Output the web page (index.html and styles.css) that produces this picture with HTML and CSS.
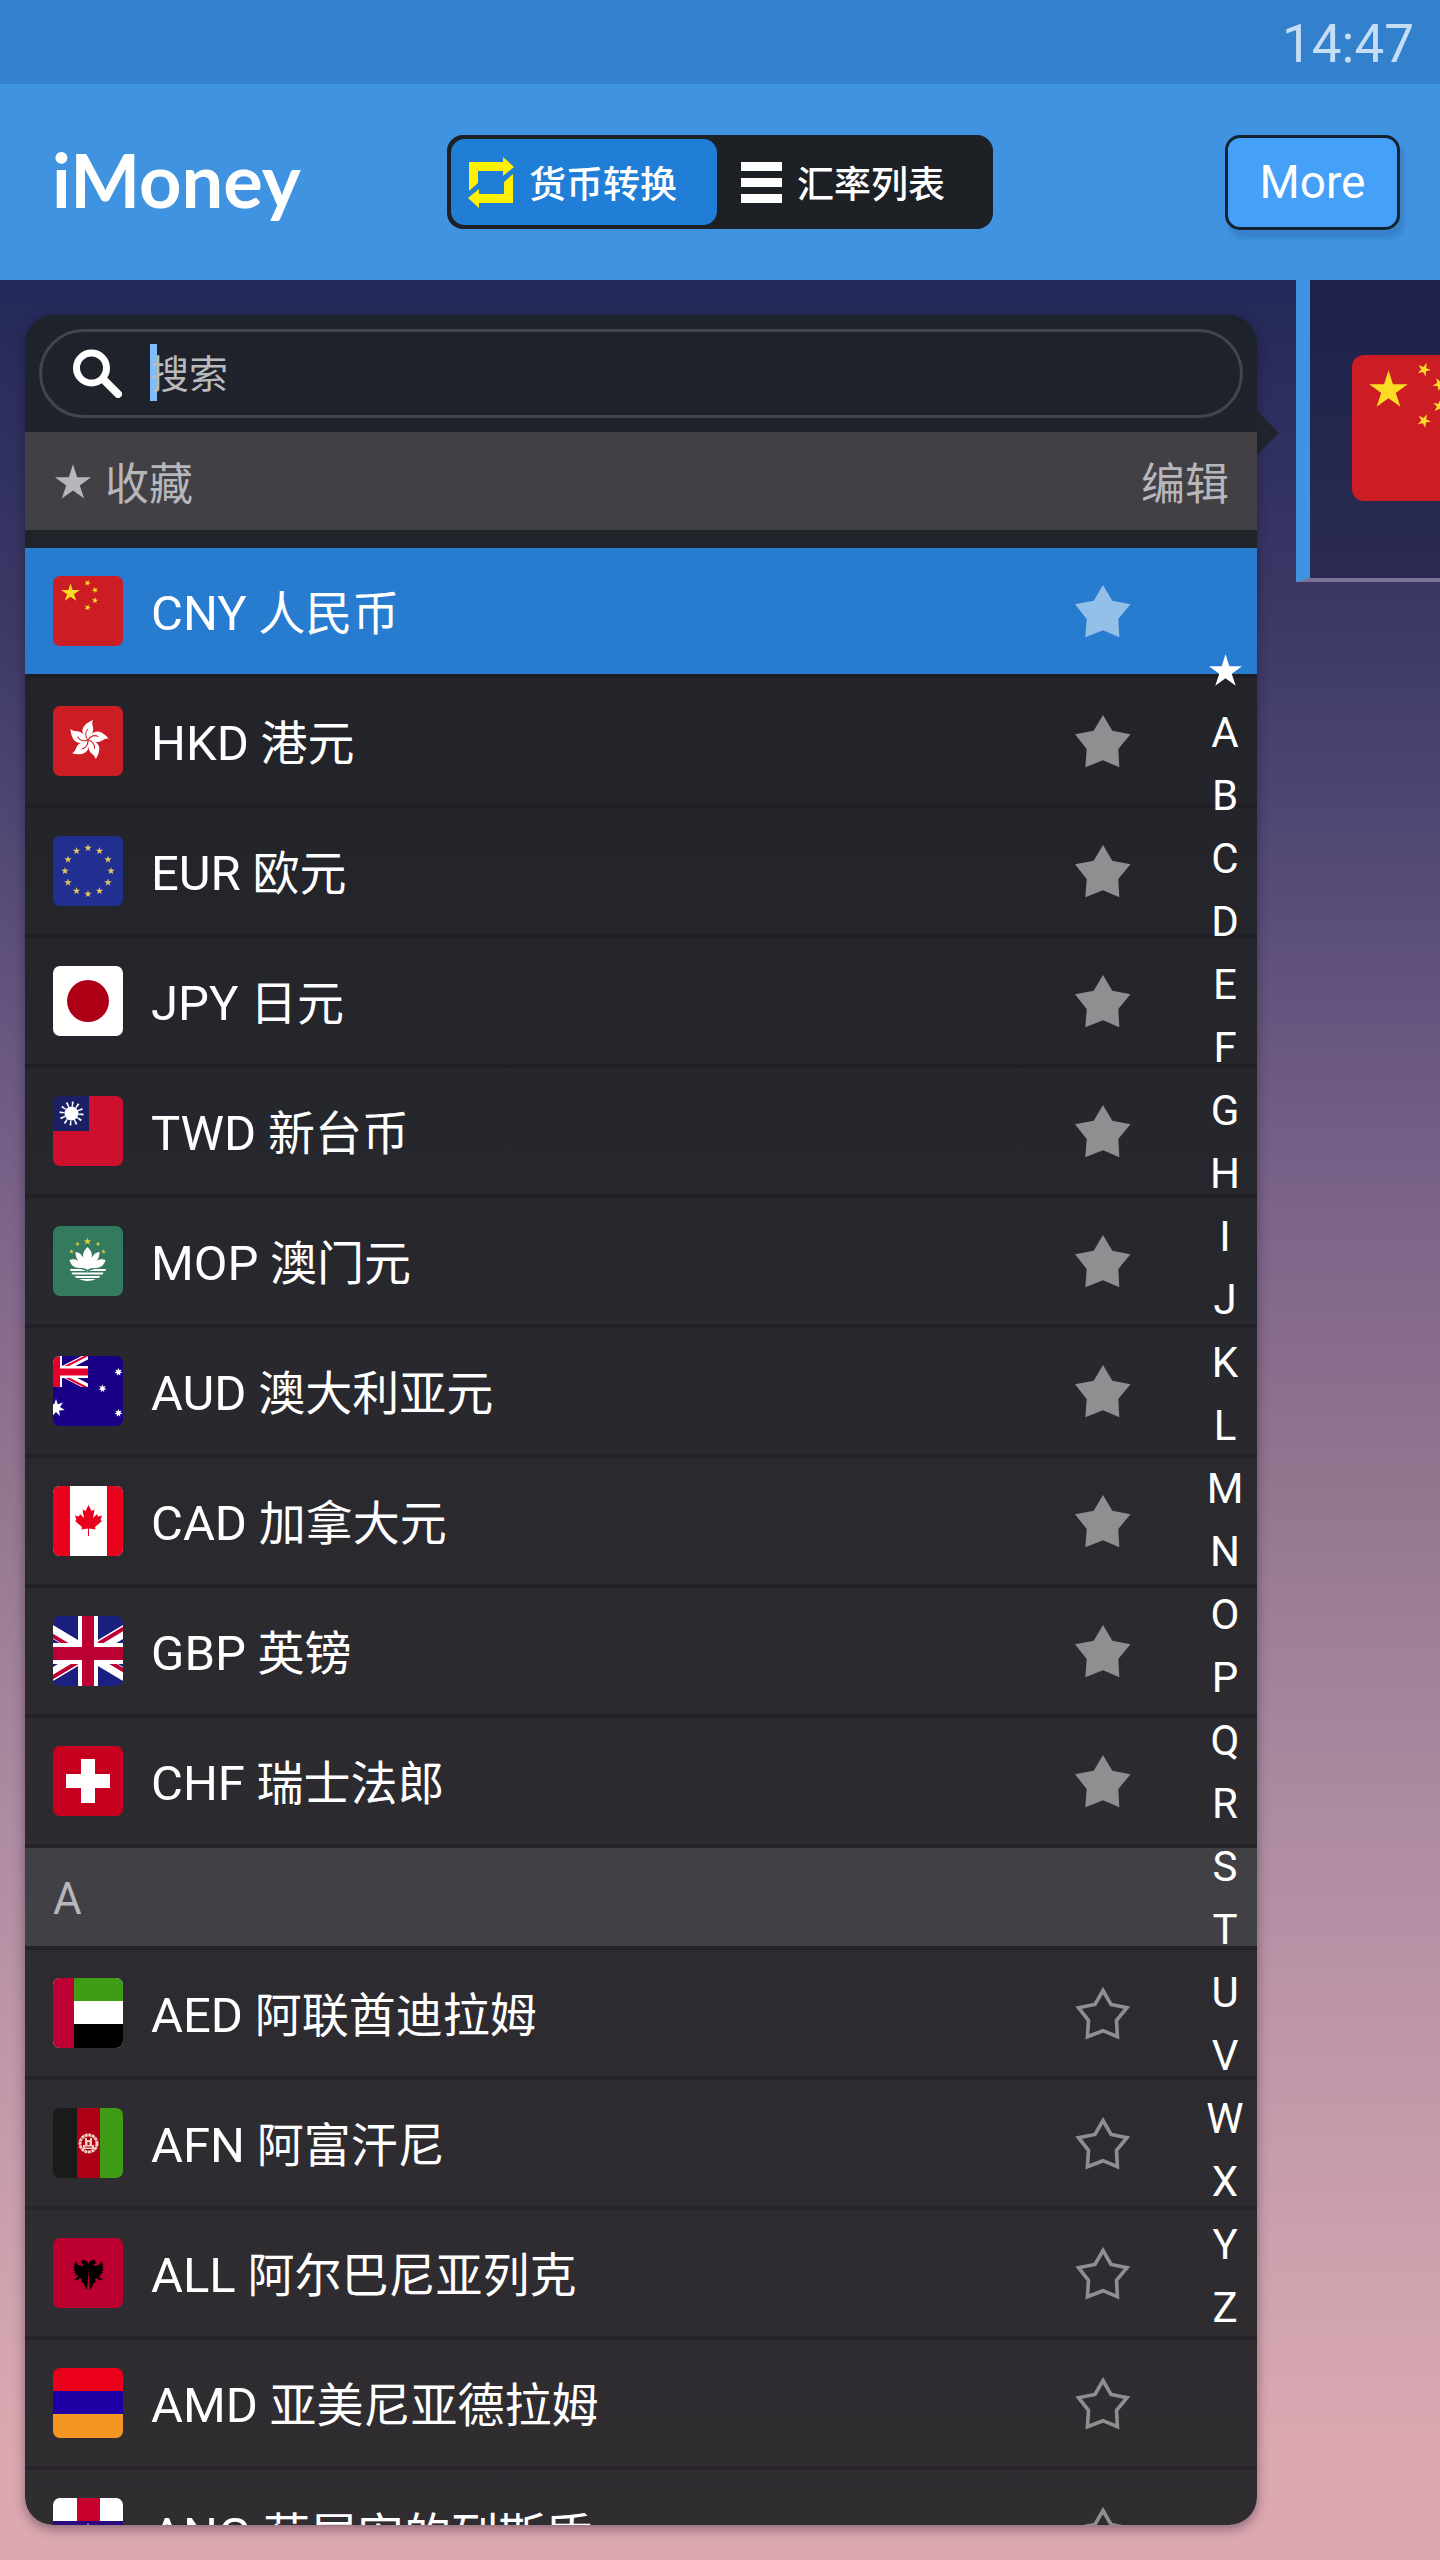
FILE: index.html
```html
<!DOCTYPE html>
<html lang="zh-CN">
<head>
    <meta charset="UTF-8">
    <meta name="viewport" content="width=device-width, initial-scale=1.0">
    <title>iMoney</title>
    <link rel="stylesheet" href="styles.css">
</head>
<body>
    <!-- shared shapes and flags -->
    <svg class="defs" width="0" height="0" aria-hidden="true">
        <defs>
            <path id="s5" d="M0-10 2.2-3.1 9.5-3.1 3.6 1.2 5.9 8.1 0 3.8-5.9 8.1-3.6 1.2-9.5-3.1-2.2-3.1z"/>
            <path id="s7" d="M0-10 2-4.1 7.8-6.2 4.4-1 9.7 2.2 3.5 2.8 4.3 9 0 4.5-4.3 9-3.5 2.8-9.7 2.2-4.4-1-7.8-6.2-2-4.1z"/>
            <path id="petal" d="M0 0C-5-3-8-10-3-15-1-17 2-19 5-20 3-16 6-13 5-9 4-5 1-4 0 0z"/>
            <symbol id="star-full" viewBox="0 0 56 53">
                <path d="M28 0 37.3 15.7 55.5 19.3 43.3 34 44.3 52.3 28 45.3 10.3 52.3 11.7 34 0 19.3 18.7 15.7z"/>
            </symbol>
            <symbol id="star-line" viewBox="0 0 56 53">
                <path fill="none" stroke="currentColor" stroke-width="3.600" d="M28 3.500 36 17.500 52 20.700 41.500 33.300 42.400 49.700 28 43.700 12.400 49.700 13.500 33.300 3.500 20.700 20 17.500z"/>
            </symbol>
            <symbol id="cny" viewBox="0 0 70 70">
                <path fill="#cb1d23" d="M0 0h70v70H0z"/>
                <g fill="#fbdc25">
                    <use href="#s5" transform="translate(17.5 17) scale(.97)"/>
                    <use href="#s5" transform="translate(34.5 7) rotate(22) scale(.34)"/>
                    <use href="#s5" transform="translate(42 14) rotate(44) scale(.34)"/>
                    <use href="#s5" transform="translate(42 24.5) rotate(8) scale(.34)"/>
                    <use href="#s5" transform="translate(34.5 31.5) rotate(25) scale(.34)"/>
                </g>
            </symbol>
            <symbol id="hkd" viewBox="0 0 70 70">
                <path fill="#cb1d23" d="M0 0h70v70H0z"/>
                <g transform="translate(35 34)">
                    <g fill="#fff">
                        <use href="#petal"/>
                        <use href="#petal" transform="rotate(72)"/>
                        <use href="#petal" transform="rotate(144)"/>
                        <use href="#petal" transform="rotate(216)"/>
                        <use href="#petal" transform="rotate(288)"/>
                    </g>
                    <g fill="none" stroke="#cb1d23" stroke-width="1">
                        <path id="vn" d="M0 0C-3-4-3-8 0-11"/>
                        <use href="#vn" transform="rotate(72)"/>
                        <use href="#vn" transform="rotate(144)"/>
                        <use href="#vn" transform="rotate(216)"/>
                        <use href="#vn" transform="rotate(288)"/>
                    </g>
                </g>
            </symbol>
            <symbol id="eur" viewBox="0 0 70 70">
                <path fill="#202f90" d="M0 0h70v70H0z"/>
                <g fill="#e3c466">
                    <use href="#s5" transform="translate(35 12) scale(.4)"/>
                    <use href="#s5" transform="translate(46.5 15) scale(.4)"/>
                    <use href="#s5" transform="translate(55 23.5) scale(.4)"/>
                    <use href="#s5" transform="translate(58 35) scale(.4)"/>
                    <use href="#s5" transform="translate(55 46.5) scale(.4)"/>
                    <use href="#s5" transform="translate(46.5 55) scale(.4)"/>
                    <use href="#s5" transform="translate(35 58) scale(.4)"/>
                    <use href="#s5" transform="translate(23.5 55) scale(.4)"/>
                    <use href="#s5" transform="translate(15 46.5) scale(.4)"/>
                    <use href="#s5" transform="translate(12 35) scale(.4)"/>
                    <use href="#s5" transform="translate(15 23.5) scale(.4)"/>
                    <use href="#s5" transform="translate(23.5 15) scale(.4)"/>
                </g>
            </symbol>
            <symbol id="jpy" viewBox="0 0 70 70">
                <path fill="#fff" d="M0 0h70v70H0z"/>
                <circle cx="35" cy="35" r="21" fill="#ad0017"/>
            </symbol>
            <symbol id="twd" viewBox="0 0 70 70">
                <path fill="#cf0f2e" d="M0 0h70v70H0z"/>
                <path fill="#1b2065" d="M0 0h36v35H0z"/>
                <circle cx="18.500" cy="17.500" r="9.500" fill="none" stroke="#fff" stroke-width="5" stroke-dasharray="1.6 3.374"/>
                <circle cx="18.500" cy="17.500" r="7" fill="#fff"/>
            </symbol>
            <symbol id="mop" viewBox="0 0 70 70">
                <path fill="#347a5e" d="M0 0h70v70H0z"/>
                <g fill="#e0cf3d">
                    <use href="#s5" transform="translate(34.5 15.500) scale(.4)"/>
                    <use href="#s5" transform="translate(24.500 18) scale(.25)"/>
                    <use href="#s5" transform="translate(45 18) scale(.25)"/>
                    <use href="#s5" transform="translate(18.500 25.500) scale(.25)"/>
                    <use href="#s5" transform="translate(50.500 25.500) scale(.25)"/>
                </g>
                <g fill="#fff">
                    <path d="M34.500 21c4 4 5 7 4 11 2-4 5-6 8-6 0 4-1 7-3 9 3-2 6-2 9-1-1 5-5 8-10 8-3 0-5 0-8 2-3-2-5-2-8-2-5 0-9-3-10-8 3-1 6-1 9 1-2-2-3-5-3-9 3 0 6 2 8 6-1-4 0-7 4-11z"/>
                    <path d="M17 43h11l6.500 2.500L41 43h12l-.5 2h-35zM18.500 46.500h32l-1 2h-30zM21.500 50h26l-2 2h-22zM26 53h17q-8.500 4-17 0z"/>
                </g>
            </symbol>
            <symbol id="aud" viewBox="0 0 70 70">
                <path fill="#1a0087" d="M0 0h70v70H0z"/>
                <path stroke="#fff" stroke-width="6" d="M6 15 37-1M6 16 37 32"/>
                <path stroke="#e4002b" stroke-width="2" d="M6 14 37-2M8 18.500 37 33.500"/>
                <path fill="#1a0087" d="M35 0h5v40h-5zM0 31h40v5H0z"/>
                <path fill="#fff" d="M0 0h9v31H0zM0 10h35v12H0z"/>
                <path fill="#e4002b" d="M0 0h7v31H0zM0 12.500h35v7H0z"/>
                <g fill="#fff">
                    <use href="#s7" transform="translate(3 52) scale(.9)"/>
                    <use href="#s7" transform="translate(49.500 32.500) scale(.42)"/>
                    <use href="#s7" transform="translate(65.500 16) scale(.42)"/>
                    <use href="#s7" transform="translate(65.500 57) scale(.42)"/>
                </g>
            </symbol>
            <symbol id="cad" viewBox="0 0 70 70">
                <path fill="#fff" d="M0 0h70v70H0z"/>
                <path fill="#e8001c" d="M0 0h17v70H0zM54 0h16v70H54z"/>
                <path fill="#e8001c" d="M35.500 19 38.500 25l3-1.500L40 32l4-4 1 2.500 4-1-1.500 4.500 1.500 1-7 6 .5 2.500-6.500-1V50h-1v-7.500l-6.500 1L29 41l-7-6 1.500-1L22 29.500l4 1L27 28l4 4-1.500-8.500 3 1.500z"/>
            </symbol>
            <symbol id="gbp" viewBox="0 0 70 70">
                <path fill="#1b2080" d="M0 0h70v70H0z"/>
                <path stroke="#fff" stroke-width="12" d="M-5 13 75 61M75 13-5 61"/>
                <path stroke="#bd0034" stroke-width="4" d="M-5 17 35 41M75 57 35 33M75 10 35 34M-5 64 35 40"/>
                <path fill="#fff" d="M25 0h20v70H25zM0 27h70v21H0z"/>
                <path fill="#bd0034" d="M29 0h12v70H29zM0 31h70v13H0z"/>
            </symbol>
            <symbol id="chf" viewBox="0 0 70 70">
                <path fill="#c8001f" d="M0 0h70v70H0z"/>
                <path fill="#fff" d="M28 13h14v15h15v14H42v15H28V42H13V28h15z"/>
            </symbol>
            <symbol id="aed" viewBox="0 0 70 70">
                <path fill="#fff" d="M0 0h70v70H0z"/>
                <path fill="#3f9c15" d="M20 0h50v23H20z"/>
                <path d="M20 46h50v24H20z"/>
                <path fill="#bd0034" d="M0 0h21v70H0z"/>
            </symbol>
            <symbol id="afn" viewBox="0 0 70 70">
                <path fill="#1a1a1a" d="M0 0h24v70H0z"/>
                <path fill="#ad0017" d="M24 0h23v70H24z"/>
                <path fill="#3f9c15" d="M47 0h23v70H47z"/>
                <circle cx="35.500" cy="35.500" r="8.500" fill="none" stroke="#f3cfc2" stroke-width="3" stroke-dasharray="3 .6"/>
                <path fill="#f3cfc2" d="M32 37v-7h2v2h3v-2h2v7h2v4H30v-4z"/>
                <path fill="#ad0017" d="M34.500 34h2v3h-2zM32 38.500h7v1h-7z"/>
            </symbol>
            <symbol id="all" viewBox="0 0 70 70">
                <path fill="#bb002f" d="M0 0h70v70H0z"/>
                <!-- half of the eagle, mirrored below -->
                <path id="wing" d="M36 27c-1-4-4-5.500-8-5l2 1.500-3 1 3 1.500 0 2-5-1-3-5 .5 4-2-1 1.500 3.500-2 0 2 2.500-2 .5 2.500 2-2 1 3 1-1.500 2 3-.5-.5 2-4 3.500 3.500-1 .5 1.500 2-3 2.500 1-1 4 2-1 1.500 4 2.500 4z"/>
                <use href="#wing" transform="matrix(-1 0 0 1 71 0)"/>
            </symbol>
            <symbol id="amd" viewBox="0 0 70 70">
                <path fill="#ea001b" d="M0 0h70v24H0z"/>
                <path fill="#2000a5" d="M0 23h70v24H0z"/>
                <path fill="#f39722" d="M0 46h70v24H0z"/>
            </symbol>
            <symbol id="ang" viewBox="0 0 70 70">
                <path fill="#fff" d="M0 0h70v70H0z"/>
                <path fill="#c8002e" d="M24 0h23v70H24z"/>
                <path fill="#2b0a80" d="M0 23h70v24H0z"/>
                <use href="#s5" fill="#fff" transform="translate(35 28) scale(.3)"/>
            </symbol>
        </defs>
    </svg>

    <div class="status"><time>14:47</time></div>

    <header class="topbar">
        <h1>iMoney</h1>
        <nav class="tabs">
            <button class="tab active">
                <svg width="46" height="51" viewBox="0 0 46 51" fill="#fff200" aria-hidden="true">
                    <path d="M1 5h34V0l11 10-11 9v-5H10v12l-9 8z"/>
                    <path d="M45 46H11v5L0 41l11-9v5h25V25l9-8z"/>
                </svg>
                货币转换
            </button>
            <button class="tab">
                <svg width="41" height="41" viewBox="0 0 41 41" fill="#fff" aria-hidden="true">
                    <path d="M0 0h41v9H0zM0 16h41v9H0zM0 32h41v9H0z"/>
                </svg>
                汇率列表
            </button>
        </nav>
        <button class="more">More</button>
    </header>

    <main>
        <section class="picker">
            <div class="panel">
                <div class="search-wrap">
                    <label class="search">
                        <svg width="49" height="49" viewBox="0 0 49 49" fill="none" stroke="#fff" aria-hidden="true">
                            <circle cx="18.500" cy="19" r="15" stroke-width="7"/>
                            <path d="M30 30 45 45" stroke-width="8" stroke-linecap="round"/>
                        </svg>
                        <span class="field">
                            <span class="caret"></span>
                            <input type="text" placeholder="搜索" aria-label="搜索">
                        </span>
                    </label>
                </div>

                <div class="group">
                    <h2><svg width="36" height="35" viewBox="-9.500 -10 19 18.200" fill="currentColor" aria-hidden="true"><use href="#s5"/></svg>收藏</h2>
                    <button class="edit">编辑</button>
                </div>
                <ul class="list favs">
                    <li class="selected"><svg class="flag"><use href="#cny"/></svg><span><b>CNY</b> 人民币</span><button class="star" aria-label="CNY"><svg><use href="#star-full"/></svg></button></li>
                    <li><svg class="flag"><use href="#hkd"/></svg><span><b>HKD</b> 港元</span><button class="star" aria-label="HKD"><svg><use href="#star-full"/></svg></button></li>
                    <li><svg class="flag"><use href="#eur"/></svg><span><b>EUR</b> 欧元</span><button class="star" aria-label="EUR"><svg><use href="#star-full"/></svg></button></li>
                    <li><svg class="flag"><use href="#jpy"/></svg><span><b>JPY</b> 日元</span><button class="star" aria-label="JPY"><svg><use href="#star-full"/></svg></button></li>
                    <li><svg class="flag"><use href="#twd"/></svg><span><b>TWD</b> 新台币</span><button class="star" aria-label="TWD"><svg><use href="#star-full"/></svg></button></li>
                    <li><svg class="flag"><use href="#mop"/></svg><span><b>MOP</b> 澳门元</span><button class="star" aria-label="MOP"><svg><use href="#star-full"/></svg></button></li>
                    <li><svg class="flag"><use href="#aud"/></svg><span><b>AUD</b> 澳大利亚元</span><button class="star" aria-label="AUD"><svg><use href="#star-full"/></svg></button></li>
                    <li><svg class="flag"><use href="#cad"/></svg><span><b>CAD</b> 加拿大元</span><button class="star" aria-label="CAD"><svg><use href="#star-full"/></svg></button></li>
                    <li><svg class="flag"><use href="#gbp"/></svg><span><b>GBP</b> 英镑</span><button class="star" aria-label="GBP"><svg><use href="#star-full"/></svg></button></li>
                    <li><svg class="flag"><use href="#chf"/></svg><span><b>CHF</b> 瑞士法郎</span><button class="star" aria-label="CHF"><svg><use href="#star-full"/></svg></button></li>
                </ul>

                <div class="group letter">
                    <h2>A</h2>
                </div>
                <ul class="list">
                    <li><svg class="flag"><use href="#aed"/></svg><span><b>AED</b> 阿联酋迪拉姆</span><button class="star" aria-label="AED"><svg><use href="#star-line"/></svg></button></li>
                    <li><svg class="flag"><use href="#afn"/></svg><span><b>AFN</b> 阿富汗尼</span><button class="star" aria-label="AFN"><svg><use href="#star-line"/></svg></button></li>
                    <li><svg class="flag"><use href="#all"/></svg><span><b>ALL</b> 阿尔巴尼亚列克</span><button class="star" aria-label="ALL"><svg><use href="#star-line"/></svg></button></li>
                    <li><svg class="flag"><use href="#amd"/></svg><span><b>AMD</b> 亚美尼亚德拉姆</span><button class="star" aria-label="AMD"><svg><use href="#star-line"/></svg></button></li>
                    <li><svg class="flag"><use href="#ang"/></svg><span><b>ANG</b> 荷属安的列斯盾</span><button class="star" aria-label="ANG"><svg><use href="#star-line"/></svg></button></li>
                </ul>
            </div>

            <nav class="index">
                <a href="#"><svg width="33" height="32" viewBox="-9.500 -10 19 18.200" fill="#fff" aria-hidden="true"><use href="#s5"/></svg></a>
                <a href="#">A</a>
                <a href="#">B</a>
                <a href="#">C</a>
                <a href="#">D</a>
                <a href="#">E</a>
                <a href="#">F</a>
                <a href="#">G</a>
                <a href="#">H</a>
                <a href="#">I</a>
                <a href="#">J</a>
                <a href="#">K</a>
                <a href="#">L</a>
                <a href="#">M</a>
                <a href="#">N</a>
                <a href="#">O</a>
                <a href="#">P</a>
                <a href="#">Q</a>
                <a href="#">R</a>
                <a href="#">S</a>
                <a href="#">T</a>
                <a href="#">U</a>
                <a href="#">V</a>
                <a href="#">W</a>
                <a href="#">X</a>
                <a href="#">Y</a>
                <a href="#">Z</a>
            </nav>
        </section>

        <aside class="card">
            <svg class="flag big"><use href="#cny"/></svg>
        </aside>
    </main>
</body>
</html>
```

FILE: styles.css
```css
*{
    box-sizing: border-box;
}
body{
    margin: 0;
    height: 100vh;
    display: flex;
    flex-direction: column;
    overflow: hidden;
    color: #fff;
    font-family: Roboto, "Noto Sans CJK SC", sans-serif;
    background: linear-gradient(#20265a 0, #242959 11%, #3a3765 23%, #494370 30%, #7b6389 47%, #93758f 58%, #ab8aa0 70%, #c399aa 82%, #d0a3ae 90%, #dca8b1 96%);
}
h1,h2,ul{
    margin: 0;
    padding: 0;
    font-weight: 400;
}
ul{
    list-style: none;
}
button{
    font-family: inherit;
    color: inherit;
    background: none;
    border: none;
    padding: 0;
}
svg{
    display: block;
    flex-shrink: 0;
}
.defs{
    position: absolute;
}

/* top */
.status{
    height: 84px;
    padding: 4px 26px 0;
    display: flex;
    align-items: center;
    justify-content: flex-end;
    flex-shrink: 0;
    background: #3380cc;
    color: #c5ddf5;
    font-size: 53px;
}
.topbar{
    height: 196px;
    padding: 0 40px 0 52px;
    display: grid;
    grid-template-columns: 1fr auto 1fr;
    align-items: center;
    flex-shrink: 0;
    background: #3f93e1;
}
.topbar h1{
    padding-bottom: 4px;
    font-family: Lato, sans-serif;
    font-weight: 700;
    font-size: 74px;
    line-height: 96px;
}
.tabs{
    display: flex;
    margin-right: 12px;
    padding: 4px;
    border-radius: 16px;
    background: #1d2126;
}
.tab{
    display: flex;
    align-items: center;
    gap: 15px;
    height: 86px;
    padding: 0 44px 0 24px;
    font-size: 37px;
    font-weight: 500;
    border-radius: 14px;
}
.tab.active{
    padding: 0 40px 0 17px;
    background: #217ed7;
}
.more{
    justify-self: end;
    width: 175px;
    height: 95px;
    border: 3px solid #12222f;
    border-radius: 15px;
    background: #45a0f8;
    box-shadow: 4px 8px 4px rgba(30, 60, 110, 0.2);
    font-size: 46px;
}

main{
    flex: 1;
    min-height: 0;
    display: flex;
    align-items: flex-start;
}
.picker{
    position: relative;
    flex: 1;
    align-self: stretch;
    margin: 35px 39px 35px 25px;
}
/* pointer towards the selected card */
.picker::after{
    content: "";
    position: absolute;
    left: 100%;
    top: 96px;
    border: 22px solid transparent;
    border-left-color: #1f232b;
    border-right: none;
}
.panel{
    height: 100%;
    overflow: hidden;
    border-radius: 28px;
    background: linear-gradient(#1e222a, #23242a 18%, #27272e 42%, #2b2a2e 60%, #302d31);
    box-shadow: 0 4px 12px rgba(20, 10, 30, 0.4);
}
.search-wrap{
    padding: 14px;
}
.search{
    display: flex;
    align-items: center;
    gap: 28px;
    height: 89px;
    padding: 0 31px;
    border: 3px solid #42454c;
    border-radius: 45px;
}
.field{
    position: relative;
    flex: 1;
}
.field input{
    display: block;
    position: relative;
    width: 100%;
    height: 60px;
    padding: 2px 0 0;
    border: none;
    outline: none;
    background: none;
    color: #fff;
    font-family: inherit;
    font-size: 39px;
}
.field input::placeholder{
    color: #b9babd;
    opacity: 1;
}
.caret{
    position: absolute;
    left: 0;
    top: 0;
    width: 7px;
    height: 57px;
    background: #7fbcff;
}

.group{
    display: flex;
    align-items: center;
    justify-content: space-between;
    height: 98px;
    padding: 0 28px 0 30px;
    background: #414045;
    color: #b7b6bb;
}
.group h2,.edit{
    display: flex;
    align-items: center;
    gap: 14px;
    font-size: 44px;
}
.group.letter{
    padding: 4px 28px 0;
}
.favs{
    padding-top: 18px;
}
.list li{
    display: flex;
    align-items: center;
    height: 130px;
    padding: 0 126px 0 28px;
    gap: 28px;
    border-bottom: 4px solid rgba(15, 12, 20, 0.25);
    font-size: 47px;
}
.letter + .list{
    border-top: 4px solid rgba(15, 12, 20, 0.25);
}
.list li span{
    flex: 1;
    padding-bottom: 4px;
    white-space: nowrap;
}
.list b{
    font-size: 49px;
    font-weight: 400;
}
.list .selected{
    background: #287ccf;
    background-clip: padding-box;
}
.flag{
    width: 70px;
    height: 70px;
    border-radius: 7px;
}
.star svg{
    width: 56px;
    height: 53px;
    fill: currentColor;
}
.star{
    color: #8f8f92;
}
.selected .star{
    color: #93c0e9;
}

.index{
    position: absolute;
    top: 323px;
    right: 2px;
    width: 60px;
}
.index a{
    display: flex;
    align-items: center;
    justify-content: center;
    height: 63px;
    color: #fff;
    font-size: 42px;
    text-decoration: none;
}

.card{
    width: 10%;
    height: 302px;
    padding: 75px 0 0 42px;
    overflow: hidden;
    border-left: 14px solid #3f93e1;
    border-bottom: 4px solid #7b7395;
    background: linear-gradient(#1d214b, #2b2b50);
}
.flag.big{
    width: 146px;
    height: 146px;
    border-radius: 12px;
}
```
